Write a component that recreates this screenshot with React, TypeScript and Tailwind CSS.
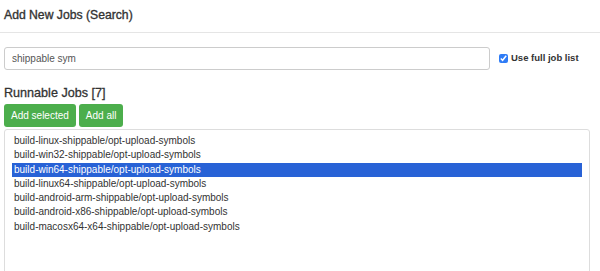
import { useState } from "react"

const jobs = [
  "build-linux-shippable/opt-upload-symbols",
  "build-win32-shippable/opt-upload-symbols",
  "build-win64-shippable/opt-upload-symbols",
  "build-linux64-shippable/opt-upload-symbols",
  "build-android-arm-shippable/opt-upload-symbols",
  "build-android-x86-shippable/opt-upload-symbols",
  "build-macosx64-x64-shippable/opt-upload-symbols",
]

export default function App() {
  const [selected, setSelected] = useState(2)
  const [query, setQuery] = useState("shippable sym")
  const [fullList, setFullList] = useState(true)

  return (
    <div className="w-[600px] h-[271px] overflow-hidden bg-white text-[#333] font-['Liberation_Sans',Arial,sans-serif]">
      {/* Header */}
      <div className="h-[33px] border-b border-[#e5e5e5] px-1 flex items-center">
        <h4 className="text-[12.2px] leading-none [-webkit-text-stroke:0.35px] -mt-[2px]">Add New Jobs (Search)</h4>
      </div>

      {/* Body */}
      <div className="px-1 pt-[14px]">
        <div className="flex items-center">
          <input
            value={query}
            onChange={(e) => setQuery(e.target.value)}
            className="w-[486px] h-[23px] border border-[#ccc] rounded-[3px] px-[7px] text-[10px] text-[#555] outline-none"
          />
          <label className="flex items-center ml-[9px] text-[9.5px] font-bold text-[#333]">
            <input
              type="checkbox"
              checked={fullList}
              onChange={(e) => setFullList(e.target.checked)}
              className="w-[9px] h-[9px] m-0 mr-[3px] accent-[#2f7cf6]"
            />
            Use full job list
          </label>
        </div>

        <h3 className="mt-[14px] text-[12.6px] leading-[18px] [-webkit-text-stroke:0.3px]">Runnable Jobs [7]</h3>

        <div className="flex gap-[3px] mt-[2px]">
          <button className="h-[23px] px-[7px] bg-[#4cae4c] text-white text-[10px] rounded-[3px]">
            Add selected
          </button>
          <button className="h-[23px] px-[7px] bg-[#4cae4c] text-white text-[10px] rounded-[3px]">
            Add all
          </button>
        </div>

        <div className="mt-[2px] mr-[6px] h-[160px] border border-[#ddd] rounded-[3px] pt-[4px] px-[7px]">
          {jobs.map((job, i) => (
            <div
              key={job}
              onClick={() => setSelected(i)}
              className={
                "h-[14.3px] leading-[14.3px] text-[10px] px-[2px] cursor-default " +
                (i === selected ? "bg-[#2862d6] text-white" : "text-[#333]")
              }
            >
              {job}
            </div>
          ))}
        </div>
      </div>
    </div>
  )
}
